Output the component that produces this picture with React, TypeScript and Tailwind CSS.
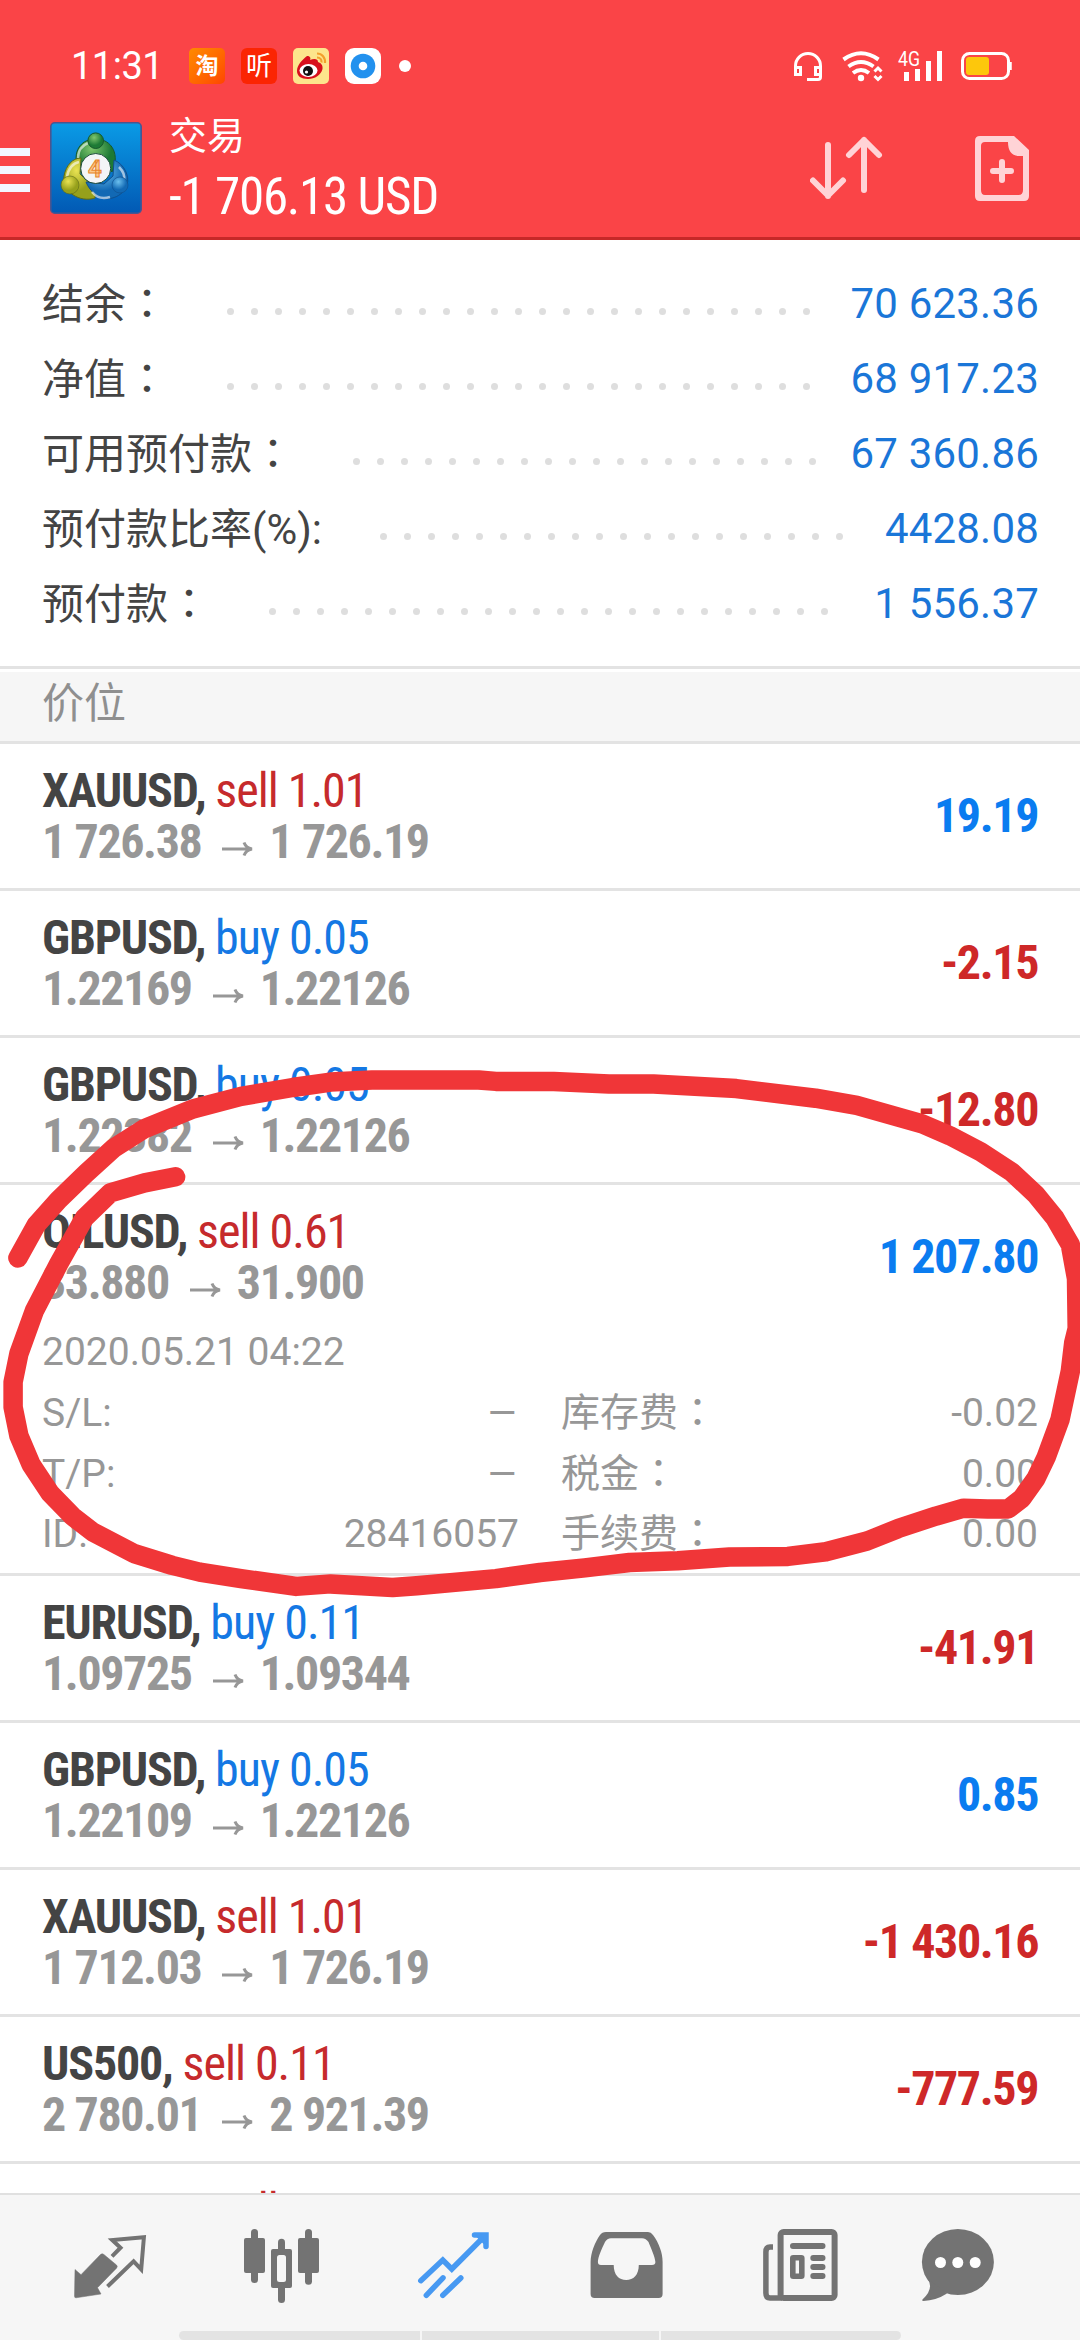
import type { ReactNode } from "react";

interface Position {
  symbol: string;
  side: "buy" | "sell";
  volume: string;
  open: string;
  current: string;
  profit: string;
  expanded?: boolean;
}

const account = [
  { label: "结余", colon: true, value: "70 623.36" },
  { label: "净值", colon: true, value: "68 917.23" },
  { label: "可用预付款", colon: true, value: "67 360.86" },
  { label: "预付款比率(%):", colon: false, value: "4428.08" },
  { label: "预付款", colon: true, value: "1 556.37" },
];

const positions: Position[] = [
  { symbol: "XAUUSD", side: "sell", volume: "1.01", open: "1 726.38", current: "1 726.19", profit: "19.19" },
  { symbol: "GBPUSD", side: "buy", volume: "0.05", open: "1.22169", current: "1.22126", profit: "-2.15" },
  { symbol: "GBPUSD", side: "buy", volume: "0.05", open: "1.22382", current: "1.22126", profit: "-12.80" },
  { symbol: "OILUSD", side: "sell", volume: "0.61", open: "33.880", current: "31.900", profit: "1 207.80", expanded: true },
  { symbol: "EURUSD", side: "buy", volume: "0.11", open: "1.09725", current: "1.09344", profit: "-41.91" },
  { symbol: "GBPUSD", side: "buy", volume: "0.05", open: "1.22109", current: "1.22126", profit: "0.85" },
  { symbol: "XAUUSD", side: "sell", volume: "1.01", open: "1 712.03", current: "1 726.19", profit: "-1 430.16" },
  { symbol: "US500", side: "sell", volume: "0.11", open: "2 780.01", current: "2 921.39", profit: "-777.59" },
  { symbol: "XAUUSD", side: "sell", volume: "0.11", open: "1 713.20", current: "1 726.19", profit: "-142.89" },
];

// full-width colon, centred in its cell
function Colon() {
  return <span className="font-['Noto_Sans_CJK_JP',sans-serif] leading-none">：</span>;
}

function Condensed({ className = "", children }: { className?: string; children: ReactNode }) {
  return (
    <span className={`font-['Roboto_Condensed','Roboto',sans-serif] [font-stretch:75%] whitespace-pre ${className}`}>
      {children}
    </span>
  );
}

function StatusBar() {
  return (
    <div className="flex h-[132px] items-center pl-[71px] pr-[68px] text-white">
      <span className="w-[118px] text-[38px] leading-none tracking-[-0.5px]">11:31</span>
      <div className="flex items-center gap-4">
        <span className="flex size-9 items-center justify-center rounded-[5px] bg-linear-to-br from-[#ff8a00] to-[#ff4400] text-[23px] leading-none font-bold">
          淘
        </span>
        <span className="flex size-9 items-center justify-center rounded-[6px] bg-[#fb2503] text-[26px] leading-none">
          听
        </span>
        <svg className="size-9" viewBox="0 0 36 36">
          <rect width="36" height="36" rx="5" fill="#fde58c" />
          <path d="M4 23C4 17 9 12 14 8c3 0 4 2 3 4 4-1.500 8-1.500 8 2 3 1 5 3 4.500 7C28 27 22 31 15 31S4 28 4 23z" fill="#d8101c" />
          <ellipse cx="15.500" cy="22.500" rx="9" ry="6.500" fill="#fff" />
          <circle cx="15" cy="23" r="5" fill="#111" />
          <circle cx="13.500" cy="24" r="1.600" fill="#fff" />
          <path d="M24 5.500c5 0 8.500 4 8 9.500M24 9.500c3 0 5 2 4.500 5" fill="none" stroke="#f3a02c" strokeWidth="2.200" />
        </svg>
        <svg className="size-9" viewBox="0 0 36 36">
          <rect width="36" height="36" rx="9" fill="#fff" />
          <circle cx="18" cy="18" r="12.300" fill="#2291ee" />
          <circle cx="18" cy="18" r="4.300" fill="#fff" />
        </svg>
      </div>
      <span className="ml-[18px] size-3 rounded-full bg-white" />

      <svg className="ml-auto h-8 w-[218px] overflow-visible" viewBox="794 50 218 32" fill="none" stroke="#fff">
        {/* headset */}
        <path d="M795.500 75V66a12.500 12.500 0 0 1 25 0v11q0 2.500-2.500 2.500H807" strokeWidth="3" />
        <path d="M795.500 67.500h5v7h-5zM815.500 67.500h5v7h-5z" strokeWidth="3" />
        {/* wifi */}
        <g strokeWidth="4">
          <path d="M843.500 59.500Q861 47 878.500 59.500M848.500 66.500Q861 57.500 873.500 66.500M853 73Q861 67 869 73" />
        </g>
        <circle cx="861" cy="78" r="3.200" fill="#fff" stroke="none" />
        <path d="M874.500 71.500l3.500-3.500 3.500 3.500M874.500 76l3.500 3.500 3.500-3.500" strokeWidth="3" />
        {/* signal */}
        <path d="M906.500 72v9M917.500 69v12M928.500 61v20M939.500 51v30" strokeWidth="5" />
        <text x="898" y="65.500" fontSize="20" fill="#fff" stroke="none" textLength="22" lengthAdjust="spacingAndGlyphs">
          4G
        </text>
        {/* battery */}
        <rect x="962.500" y="53.500" width="46" height="25" rx="7" strokeWidth="3" />
        <rect x="966" y="57" width="23" height="18" rx="3" fill="#fdc70c" stroke="none" />
        <path d="M1010.500 62v8" strokeWidth="2.500" />
      </svg>
    </div>
  );
}

function AppLogo() {
  return (
    <svg className="ml-5 size-[92px]" viewBox="0 0 92 92">
      <defs>
        <linearGradient id="sky" x1="0" y1="0" x2="0" y2="1">
          <stop offset="0" stopColor="#0a9be6" />
          <stop offset="1" stopColor="#0259b4" />
        </linearGradient>
        <radialGradient id="green" cx="0.4" cy="0.3">
          <stop offset="0" stopColor="#7fc66d" />
          <stop offset="1" stopColor="#1d7a35" />
        </radialGradient>
        <radialGradient id="yellow" cx="0.4" cy="0.3">
          <stop offset="0" stopColor="#e9e352" />
          <stop offset="1" stopColor="#96a01b" />
        </radialGradient>
        <radialGradient id="blue" cx="0.4" cy="0.3">
          <stop offset="0" stopColor="#6cc0ee" />
          <stop offset="1" stopColor="#1269b4" />
        </radialGradient>
      </defs>
      <rect x="0.800" y="0.800" width="90.400" height="90.400" rx="4" fill="url(#sky)" stroke="#4a5590" strokeWidth="1.600" />
      <path d="M30 50C21 34 28 17 45.500 17S70 34 62 50L52 38H40z" fill="url(#green)" stroke="#17592c" />
      <path d="M45 76C30 81 12 70 14 54c2-11 9-18 17-18L30 52l15 15z" fill="url(#yellow)" stroke="#5d6a17" />
      <path d="M64 38c10 4 16 16 13 25-4 12-20 18-31 10-5-4-8-8-10-13l18 2 9-8z" fill="url(#blue)" stroke="#0f4f8d" />
      <path d="M28 36c0-8 5-13 10-15M17 55c1-8 6-14 12-15M69 45c5 5 6 10 5 14M42 70c5 6 12 7 18 5" fill="none" stroke="#fff" strokeOpacity="0.6" strokeWidth="2.500" />
      <circle cx="45.700" cy="18.700" r="7.800" fill="url(#green)" stroke="#17592c" />
      <circle cx="20" cy="63" r="9" fill="url(#yellow)" stroke="#5d6a17" strokeWidth="0.600" />
      <circle cx="70" cy="63" r="8" fill="url(#blue)" stroke="#0f4f8d" strokeWidth="0.600" />
      <circle cx="45.700" cy="46.500" r="15" fill="#f4f5f7" stroke="#1d4d3b" />
      <text x="45" y="55" textAnchor="middle" fontSize="24" fontWeight="700" fill="#fbc98c" stroke="#e8862c" strokeWidth="1">
        4
      </text>
    </svg>
  );
}

function Header() {
  return (
    <header className="h-60 border-b-[3px] border-[#c62828] bg-[#fa4447]">
      <StatusBar />
      <div className="-mt-[10px] flex h-[105px] items-start">
        <div className="flex w-[30px] flex-col gap-[10px] pt-[26px]">
          <span className="h-2 bg-[#f3f6ff]" />
          <span className="h-2 bg-[#f3f6ff]" />
          <span className="h-2 bg-[#f3f6ff]" />
        </div>
        <AppLogo />
        <div className="ml-[27px] flex flex-1 flex-col text-white">
          <span className="-mt-[13px] h-[55px] text-[38px] leading-[55px]">交易</span>
          <Condensed className="mt-[3px] text-[51px] leading-[60px] font-[450] tracking-[-1.2px]">-1 706.13 USD</Condensed>
        </div>
        <svg className="mt-[14px] h-[68px] w-[220px]" viewBox="810 136 220 68" fill="none" stroke="#ffd3d6" strokeWidth="6" strokeLinecap="round" strokeLinejoin="round">
          <path d="M828 145v51M813 180.500l15 15 15-15" />
          <path d="M864 190v-50M849 155l15-15 15 15" />
          <path d="M980 136h34l15 14v46q0 5-5 5h-44q-5 0-5-5v-55q0-5 5-5zM985 142q-4 0-4 4v44q0 5 4 5h33.500q4.500 0 4.500-5v-34h-5q-10-1-10-14z" fill="#ffd3d6" fillRule="evenodd" stroke="none" />
          <path d="M1002 162v18M993 171h18" />
        </svg>
        <div className="w-[50px]" />
      </div>
    </header>
  );
}

function AccountSummary() {
  return (
    <section className="flex h-[426px] flex-col pt-[25px]">
      {account.map((row) => (
        <div key={row.label} className="flex h-[75px] items-center px-[42px] text-[42px] leading-[75px]">
          <span className="mt-1 text-[#444]">
            {row.label}
            {row.colon && <Colon />}
          </span>
          {/* leader wraps, so only whole dots stay in the first line */}
          <span className="mt-[18px] mr-[18px] ml-[50px] flex h-[7px] flex-1 flex-wrap overflow-hidden">
            {Array.from({ length: 40 }, (_, i) => (
              <span key={i} className="flex h-[7px] w-6 justify-center">
                <span className="size-[7px] rounded-full bg-[#dedede]" />
              </span>
            ))}
          </span>
          <span className="mt-[2px] -mr-px tracking-[0.2px] text-[#1a76d8]">{row.value}</span>
        </div>
      ))}
    </section>
  );
}

function Detail({ label, children }: { label: ReactNode; children: ReactNode }) {
  return (
    <div className="flex h-[60.500px] justify-between">
      <span>{label}</span>
      <span>{children}</span>
    </div>
  );
}

function Dash() {
  return <span className="inline-block origin-right scale-x-125">–</span>;
}

function PositionRow({ position }: { position: Position }) {
  const sideColor = position.side === "buy" ? "text-[#1478e4]" : "text-[#c62a2c]";
  const profitColor = position.profit.startsWith("-") ? "text-[#ce2828]" : "text-[#0a7cf0]";

  return (
    <div className="shrink-0 border-b-[3px] border-[#e3e3e3] px-[42px]">
      <div className="flex h-36 justify-between pt-[21px] text-[48px] leading-[51px]">
        <div>
          <div>
            <Condensed className="font-bold tracking-[-1.2px] text-[#444]">{position.symbol}, </Condensed>
            <Condensed className={`tracking-[-1px] ${sideColor}`}>
              {position.side} {position.volume}
            </Condensed>
          </div>
          <div className="flex items-center tracking-[-1.4px] text-[#979797]">
            <Condensed className="font-bold">{position.open}</Condensed>
            <svg className="mt-[15px] mr-4 ml-[21px] h-4 w-[31px]" viewBox="0 0 31 16" fill="none" stroke="currentColor" strokeWidth="3">
              <path d="M0 8h29M22 1.500Q24 7 30 8Q24 9 22 14.500" />
            </svg>
            <Condensed className="font-bold">{position.current}</Condensed>
          </div>
        </div>
        <Condensed className={`mt-[25px] font-bold tracking-[-1.4px] ${profitColor}`}>{position.profit}</Condensed>
      </div>
      {position.expanded && (
        <div className="-mt-[7px] h-[251px] text-[39px] leading-[60px] text-[#979797]">
          <div className="h-[61px]">2020.05.21 04:22</div>
          <div className="grid grid-cols-[477px_477px] gap-x-[42px]">
            <Detail label="S/L:"><Dash /></Detail>
            <Detail label={<>库存费<Colon /></>}>-0.02</Detail>
            <Detail label="T/P:"><Dash /></Detail>
            <Detail label={<>税金<Colon /></>}>0.00</Detail>
            <Detail label="ID:">28416057</Detail>
            <Detail label={<>手续费<Colon /></>}>0.00</Detail>
          </div>
        </div>
      )}
    </div>
  );
}

function BottomNav() {
  return (
    <nav className="flex h-[147px] shrink-0 flex-col justify-between border-t-2 border-[#e0e0e0] bg-[#f6f6f6]">
      <div className="flex gap-[93px] pt-[30px] pl-[70px] text-[#737373]">
        <svg className="size-20" viewBox="0 0 80 80" fill="none" stroke="currentColor">
          <path d="M5 44.500L11 49.700 30.500 29.500q1.700-1.500 3.400 0L46.500 40q1.500 1.500 0 3.200L27.500 62.700 31 69 6 72.800q-1.500 0-1.500-1.500z" fill="currentColor" strokeWidth="0.500" />
          <path d="M42 31.300L50.500 22.700 42.300 15 73.900 12.300 71.200 44.300 63.600 36.300 37.500 61.500" strokeWidth="4" />
        </svg>
        <svg className="size-20" viewBox="0 0 80 80" fill="currentColor">
          <rect x="8" y="4" width="7" height="54" rx="3.500" />
          <rect x="1" y="13" width="21" height="35" rx="2" />
          <rect x="35" y="13.700" width="7" height="64.300" rx="3.500" />
          <rect x="28" y="24" width="21" height="39" rx="2" />
          <rect x="34" y="30" width="9" height="27" rx="2.500" fill="#f6f6f6" />
          <rect x="62" y="4" width="7" height="55.700" rx="3.500" />
          <rect x="55" y="13" width="21" height="35" rx="2" />
        </svg>
        <svg className="size-20 text-[#4799f2]" viewBox="0 0 80 80" fill="none" stroke="currentColor" strokeWidth="5.500" strokeLinecap="round">
          <path d="M4.800 55.700L26.800 35 35.800 44 68 11.700" />
          <path d="M58.500 10H70V21.500z" fill="currentColor" stroke="none" />
          <path d="M58.500 10H70V21.500" />
          <path d="M10.300 70.300L27 52.800M26.800 70.300L44.800 53" />
        </svg>
        <svg className="size-20" viewBox="0 0 80 80" fill="currentColor" fillRule="evenodd">
          <path d="M17 7H59q3 0 5 3C70 18 73.600 28 73.600 37V69q0 4-4 4H5.600q-4 0-4-4V37C1.600 28 6 17 11 10q2-3 6-3zM22 13.300Q18 13.500 16 17C13 23 9 32 8.900 37q0 3 3 3H24.700C24.700 50 30 55 37.200 55S49.800 50 49.800 40H63q3.400 0 3.400-3C66 32 62 23 59.500 17Q57 13.500 53 13.300z" />
        </svg>
        <svg className="size-20" viewBox="0 0 80 80" fill="none" stroke="currentColor" strokeWidth="6">
          <rect x="18.600" y="7" width="54" height="66" rx="3" />
          <path d="M11 22H8Q3.900 22 3.900 27V68Q3.900 73 8 73H20" strokeWidth="5.500" />
          <path d="M31 21h29.500M51.300 33h9.200M51.300 42h9.200M51.300 51h9.200" strokeLinecap="round" />
          <rect x="30.800" y="32.800" width="9" height="18.400" rx="0.500" strokeWidth="5.600" />
        </svg>
        <svg className="-ml-[17px] size-20" viewBox="0 0 80 80" fill="currentColor">
          <ellipse cx="39.900" cy="37" rx="36" ry="33" />
          <path d="M10 54Q16 64 4.500 74.500q-1 1.500 1 1.500Q18 75.500 29 68.500z" />
          <g fill="#fff">
            <circle cx="22.500" cy="37.500" r="5.500" />
            <circle cx="39.800" cy="37.500" r="5.500" />
            <circle cx="57.200" cy="37.500" r="5.500" />
          </g>
        </svg>
      </div>
      <div className="mx-auto flex h-[9px] w-[722px] gap-[2px]">
        <span className="flex-1 rounded-l-[5px] bg-[#e3e3e3]" />
        <span className="w-[237px] bg-[#e3e3e3]" />
        <span className="flex-1 rounded-r-[5px] bg-[#e3e3e3]" />
      </div>
    </nav>
  );
}

// freehand marker circle drawn over the expanded position
function Scribble() {
  return (
    <svg className="pointer-events-none absolute top-0 left-0" width="1080" height="2340" viewBox="0 0 1080 2340" fill="none">
      <polyline
        stroke="#f03638"
        strokeWidth="19.500"
        strokeLinecap="round"
        strokeLinejoin="round"
        points="17.900,1257.900 36.200,1225 58.500,1200 86.100,1173.200 113.600,1148.200 144.600,1128.600 192.800,1109 241,1096.400 292.700,1087.500 330.600,1082.100 371.900,1080 478.700,1080 495.900,1081.400 553.800,1081.400 608.900,1083.900 653.600,1083.900 736.300,1088.600 815.500,1098.200 856.800,1105.400 922.200,1123.900 949.800,1135.700 980.800,1151.800 1011.800,1172.100 1035.900,1194.600 1054.800,1217.900 1070.300,1244.600 1076.500,1278.600 1077.200,1328.600 1073.700,1342.900 1070.300,1371.400 1060,1419.600 1046.200,1457.100 1035.900,1478.600 1022,1498.200 1008.300,1508.900 987.700,1508.900 963.600,1508.200 936,1516.100 898.100,1528.600 867.100,1541 825.800,1551.800 787.900,1556.400 729.400,1557 677.700,1560.700 629.500,1562.500 584.800,1567.900 540,1572.500 495.900,1578.600 416.700,1585.700 392.600,1587.500 330.600,1583.900 296.100,1586.400 241,1578.600 199.700,1572.100 172.200,1565.400 134.300,1553.600 93,1532.100 72.300,1516.100 49.900,1492.900 31,1464.300 18.900,1435.700 13.100,1407.100 13.100,1382.100 18.900,1353.600 34.400,1310.700 58.500,1264.300 84.400,1217.900 110.200,1192.900 144.600,1182.900 175.600,1176.800"
      />
    </svg>
  );
}

export default function App() {
  return (
    <div className="relative flex h-[2340px] w-[1080px] flex-col overflow-hidden bg-white font-['Roboto','Noto_Sans_CJK_SC',sans-serif]">
      <Header />
      <AccountSummary />
      <div className="h-[78px] shrink-0 border-y-[3px] border-[#e3e3e3] bg-white pt-[3px]">
        <div className="h-full bg-[#f6f6f6] px-[42px] text-[42px] leading-[64px] text-[#8f8f8f]">价位</div>
      </div>
      <main className="flex min-h-0 flex-1 flex-col overflow-hidden">
        {positions.map((position, i) => (
          <PositionRow key={i} position={position} />
        ))}
      </main>
      <BottomNav />
      <Scribble />
    </div>
  );
}
